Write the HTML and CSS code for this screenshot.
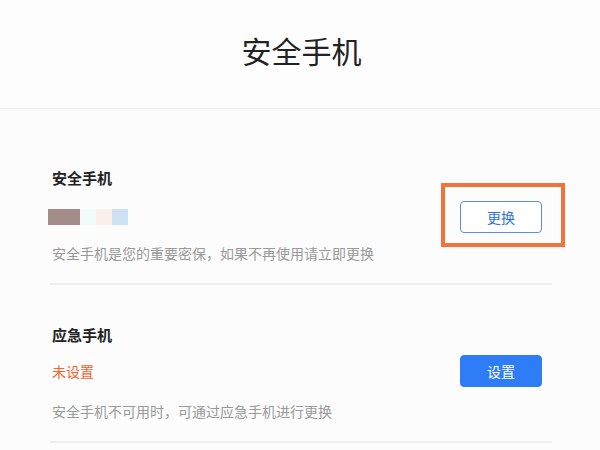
FILE: index.html
```html
<!DOCTYPE html>
<html lang="zh-CN">
<head>
<meta charset="utf-8">
<title>安全手机</title>
<link rel="stylesheet" href="styles.css">
</head>
<body>
<header class="page-header">
  <h1 class="page-title">安全手机</h1>
</header>
<main class="content">
  <section class="section section-first">
    <h2 class="section-title">安全手机</h2>
    <div class="row row-first">
      <div class="masked-phone">
        <span class="blk blk-a"></span><span class="blk blk-b"></span><span class="blk blk-c"></span><span class="blk blk-d"></span>
      </div>
      <div class="btn-wrap">
        <button class="btn btn-outline">更换</button>
        <span class="highlight"></span>
      </div>
    </div>
    <p class="desc desc-first">安全手机是您的重要密保，如果不再使用请立即更换</p>
  </section>
  <section class="section section-second">
    <h2 class="section-title">应急手机</h2>
    <div class="row row-second">
      <span class="status">未设置</span>
      <div class="btn-wrap">
        <button class="btn btn-primary">设置</button>
      </div>
    </div>
    <p class="desc desc-second">安全手机不可用时，可通过应急手机进行更换</p>
  </section>
</main>
</body>
</html>
```
FILE: styles.css
```css
* { box-sizing: border-box; }
html, body { margin: 0; padding: 0; }
body {
  background: #fcfcfc;
  font-family: "Noto Sans CJK SC", "Noto Sans", "Liberation Sans", sans-serif;
  color: #222;
}
.page-header {
  height: 109px;
  background: #fdfdfd;
  border-bottom: 1px solid #eeeeee;
  display: flex;
  align-items: center;
  justify-content: center;
  padding-bottom: 8px;
}
.page-title {
  margin: 0;
  font-size: 30px;
  font-weight: 400;
  line-height: 40px;
  color: #222;
  padding-left: 3px;
}
.content {
  width: 502px;
  margin-left: 50px;
}
.section {
  border-bottom: 2px solid #eeeeee;
  padding-bottom: 20px;
}
.section-first { padding-top: 59px; }
.section-second { padding-top: 40px; }
.section-title {
  margin: 0;
  padding-left: 2px;
  font-size: 15px;
  font-weight: 700;
  line-height: 20px;
  color: #222;
}
.row {
  display: flex;
  align-items: center;
  justify-content: space-between;
  padding-right: 10px;
}
.row-first { margin-top: 13px; }
.row-second { margin-top: 10px; }
.masked-phone {
  display: flex;
  height: 16px;
  margin-left: -2px;
}
.blk { display: block; height: 16px; width: 16px; }
.blk-a { width: 32px; background: #a38c89; }
.blk-b { background: #f1fbf9; }
.blk-c { background: #faf0ea; }
.blk-d { background: #cde1f3; }
.status {
  padding-left: 2px;
  font-size: 14px;
  line-height: 20px;
  color: #f5622d;
}
.btn-wrap {
  position: relative;
  display: flex;
}
.btn {
  width: 82px;
  height: 32px;
  border-radius: 4px;
  font-family: inherit;
  font-size: 14px;
  line-height: 20px;
  padding: 0;
  cursor: pointer;
}
.btn-outline {
  background: #ffffff;
  border: 1px solid #5b8ee0;
  color: #2f6fdf;
}
.btn-primary {
  background: #2e7cf6;
  border: 1px solid #2e7cf6;
  color: #ffffff;
}
.highlight {
  position: absolute;
  left: -19px;
  top: -18px;
  right: -23px;
  bottom: -14px;
  border: 4px solid #f2733a;
  pointer-events: none;
}
.desc {
  margin: 0;
  padding-left: 2px;
  font-size: 14px;
  line-height: 20px;
  color: #999999;
}
.desc-first { margin-top: 10px; }
.desc-second { margin-top: 14px; }
```
